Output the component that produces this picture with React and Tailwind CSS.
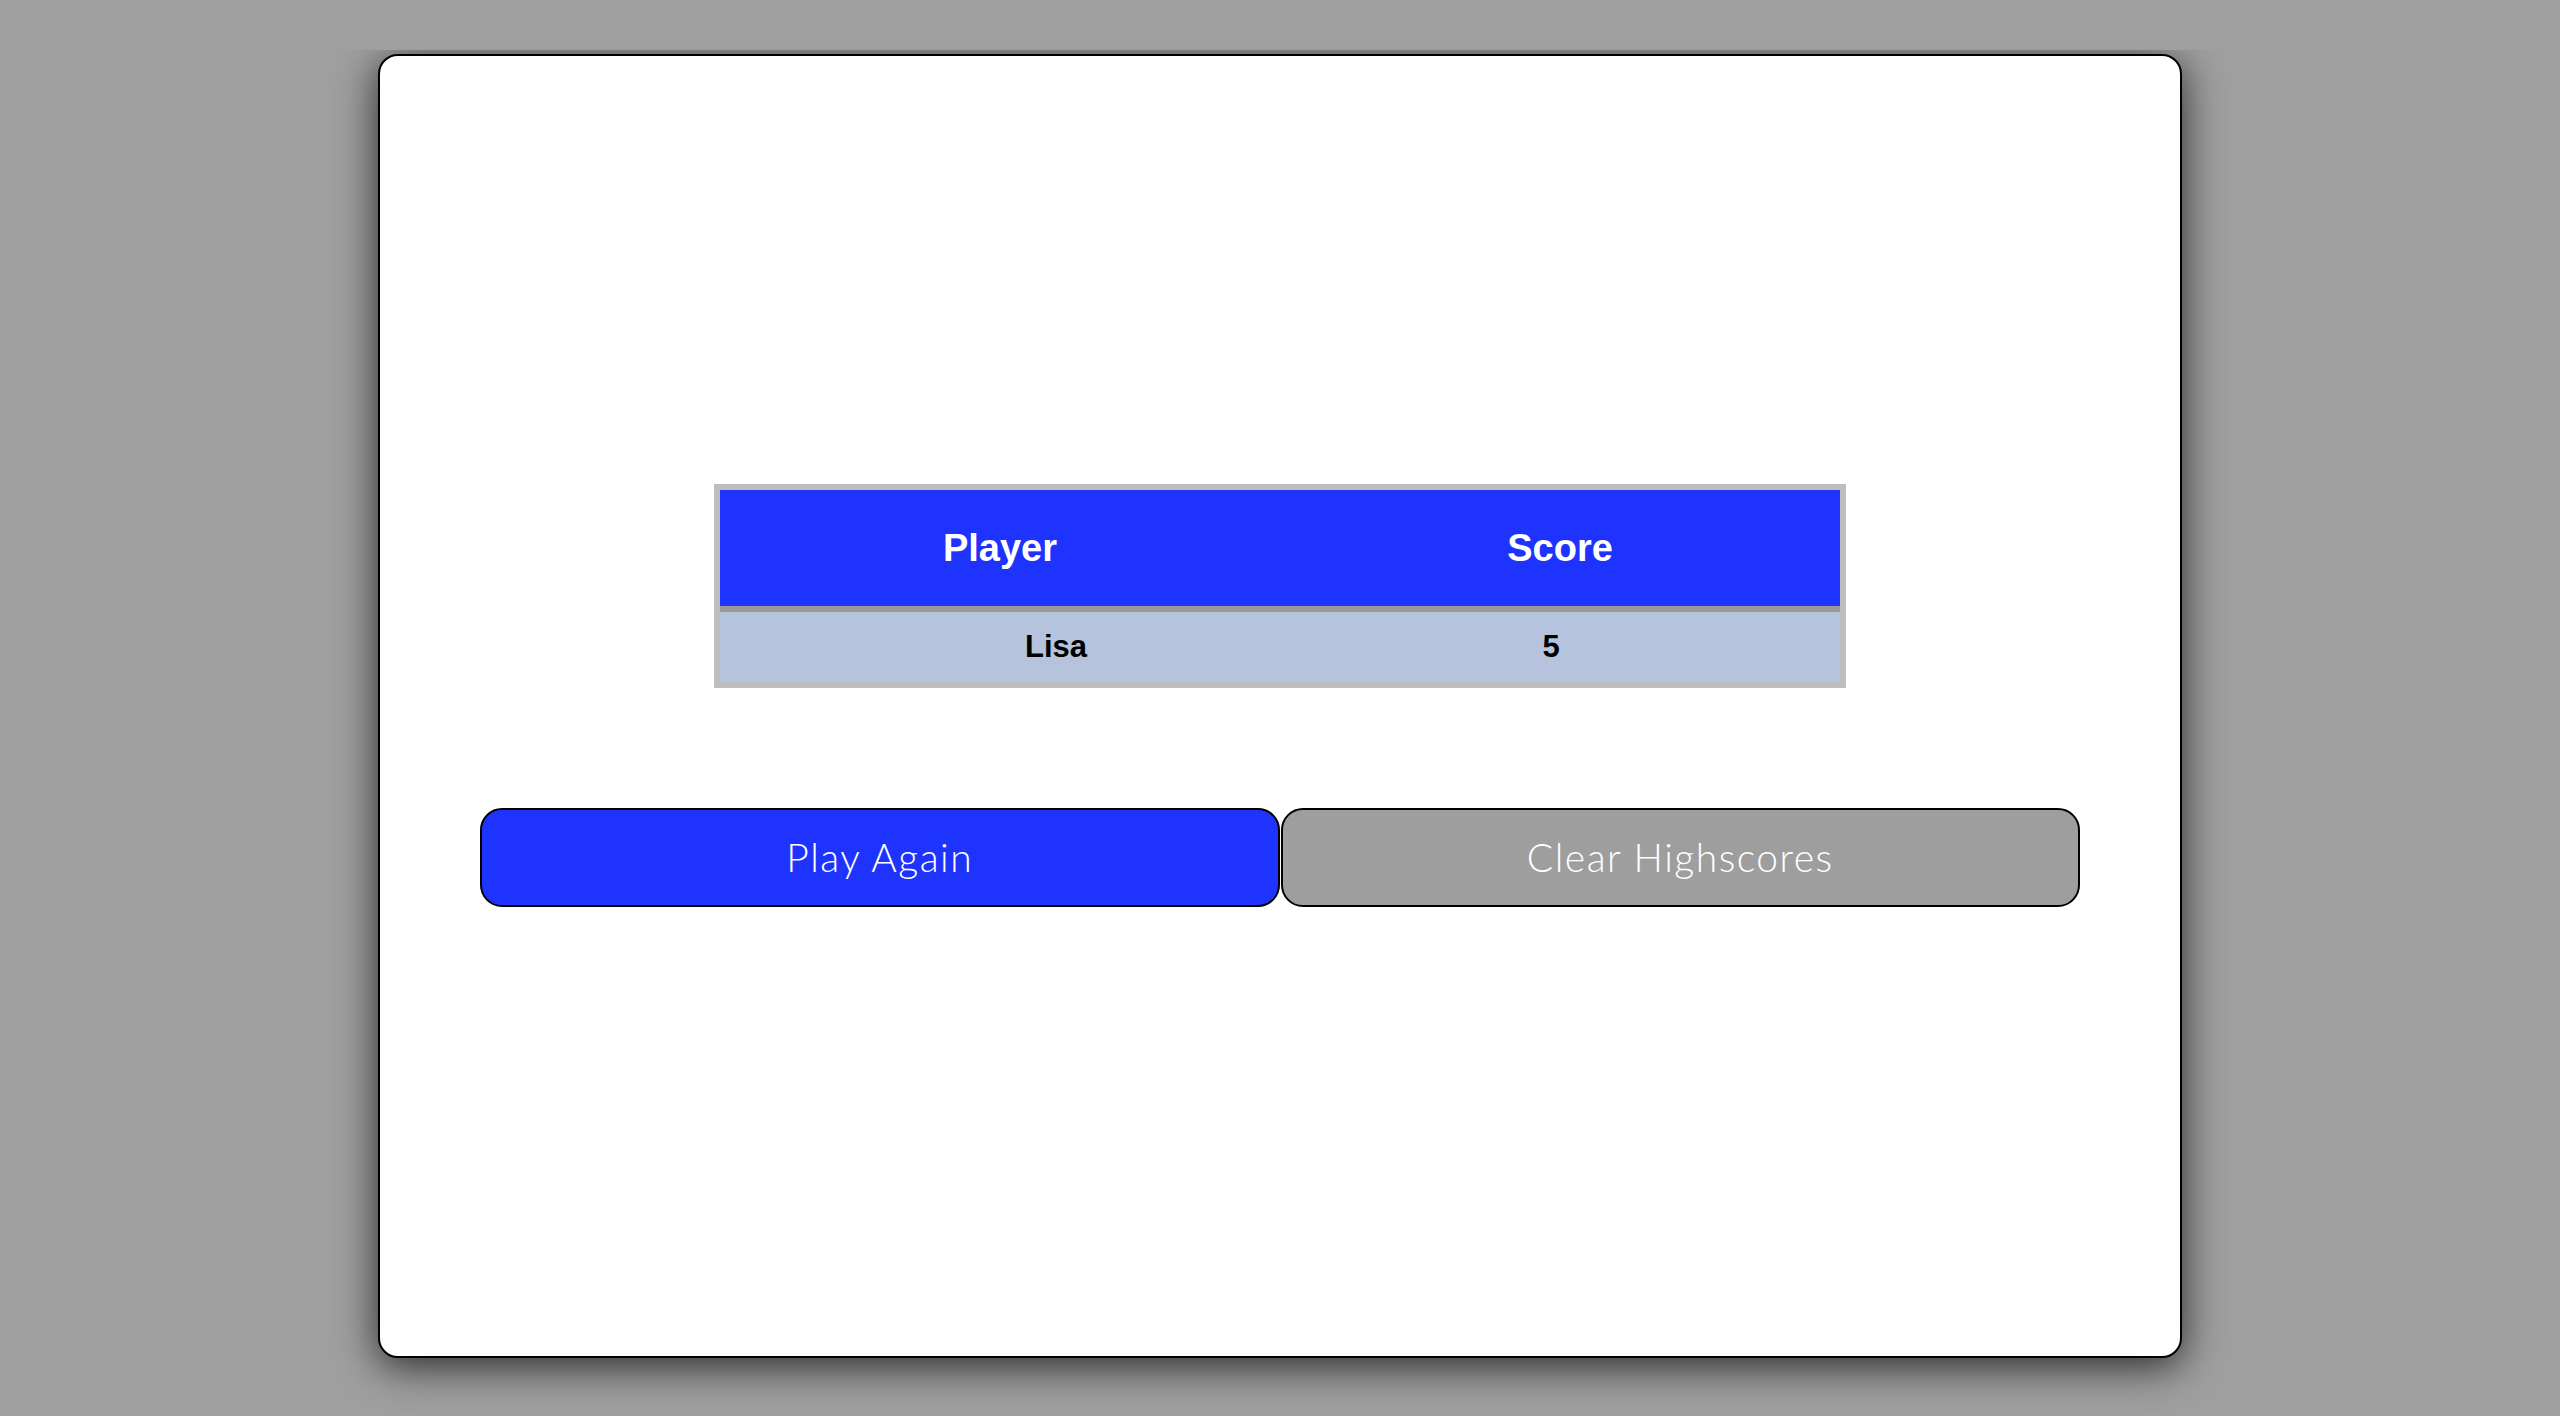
// Highscores screen — score table plus two action buttons inside a shadowed card.
const SCORES = [{ name: "Lisa", score: 5 }];

export default function App() {
  return (
    <div className="min-h-[1416px] w-full bg-[#9f9f9f] font-['Liberation_Sans',Arial,sans-serif]">
      {/* top strip sits above the card so its shadow is cut off here */}
      <div className="relative z-10 h-[50px] bg-[#9f9f9f]" />

      <div className="mx-auto mt-[4px] flex h-[1304px] w-[1804px] flex-col items-center rounded-[20px] border-2 border-black bg-white pt-[428px] shadow-[0_8px_40px_rgba(0,0,0,0.75)]">
        {/* ── Score table ─────────────────────────────── */}
        <div className="w-[1132px] border-[6px] border-[#bebebe]">
          <div className="grid h-[116px] grid-cols-2 items-center bg-[#1f33ff] text-[38px] font-bold text-white">
            <div className="text-center">Player</div>
            <div className="text-center">Score</div>
          </div>
          <div className="h-[6px] bg-[#9a9a9a]" />
          {SCORES.map(s => (
            <div
              key={s.name}
              className="grid h-[70px] grid-cols-[672px_318px] items-center bg-[#b5c3dc] text-[31px] font-bold text-black"
            >
              <div className="text-center">{s.name}</div>
              <div className="text-center">{s.score}</div>
            </div>
          ))}
        </div>

        {/* ── Buttons ─────────────────────────────────── */}
        <div className="mt-[120px] flex w-[1600px] gap-[1px] font-['Lato',sans-serif] text-[39px] font-light tracking-[1.5px] text-white">
          <button className="h-[99px] flex-1 rounded-[22px] border-2 border-black bg-[#1f33ff]">
            Play Again
          </button>
          <button className="h-[99px] flex-1 rounded-[22px] border-2 border-black bg-[#9e9e9e]">
            Clear Highscores
          </button>
        </div>
      </div>
    </div>
  );
}
